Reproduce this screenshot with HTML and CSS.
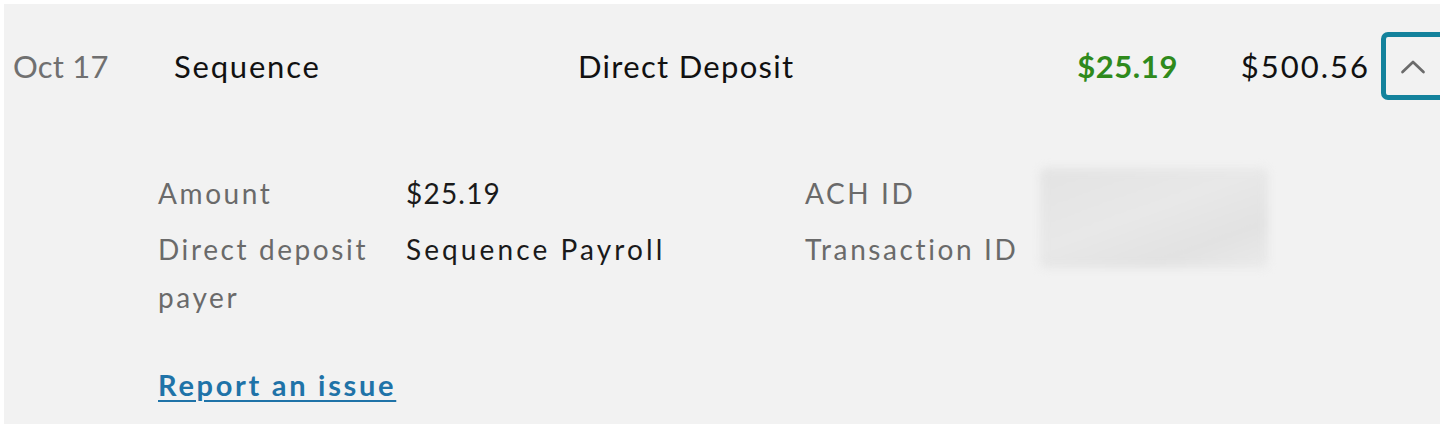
FILE: index.html
```html
<!DOCTYPE html>
<html lang="en">
<head>
<meta charset="utf-8">
<title>Transaction</title>
<link rel="stylesheet" href="styles.css">
</head>
<body>
<div class="txn">
  <div class="txn-row">
    <div class="date">Oct 17</div>
    <div class="merchant">Sequence</div>
    <div class="category">Direct Deposit</div>
    <div class="amount">$25.19</div>
    <div class="balance">$500.56</div>
    <button class="toggle" aria-label="Collapse">
      <svg width="26" height="17" viewBox="0 0 26 17"><path d="M2.5 14 L13 4 L23.5 14" fill="none" stroke="#6b6b6b" stroke-width="2.7" stroke-linecap="round" stroke-linejoin="round"/></svg>
    </button>
  </div>
  <div class="details">
    <div class="label">Amount</div>
    <div class="value num">$25.19</div>
    <div class="label">ACH ID</div>
    <div class="redacted"></div>
    <div class="label">Direct deposit payer</div>
    <div class="value">Sequence Payroll</div>
    <div class="label">Transaction ID</div>
  </div>
  <a class="report" href="#">Report an issue</a>
</div>
</body>
</html>
```
FILE: styles.css
```css
html, body {
  margin: 0;
  padding: 0;
  background: #ffffff;
}
body {
  font-family: "Lato", "Noto Sans", sans-serif;
  padding: 4px 0 0 4px;
  height: 428px;
  box-sizing: border-box;
  overflow: hidden;
}
.txn {
  background: #f2f2f2;
  height: 420px;
  overflow: hidden;
}
.txn-row {
  display: flex;
  align-items: center;
  padding: 28px 0 0 9px;
  height: 68px;
  font-size: 31px;
  letter-spacing: 1.3px;
  white-space: nowrap;
}
.date {
  width: 161px;
  color: #707070;
  letter-spacing: 0.2px;
}
.merchant {
  width: 404px;
  color: #111111;
  letter-spacing: 1.8px;
}
.category {
  flex: 1;
  color: #111111;
}
.amount {
  width: 140px;
  text-align: right;
  color: #2f8a1c;
  font-weight: 700;
  letter-spacing: 0.6px;
}
.balance {
  width: 192px;
  text-align: right;
  color: #111111;
  letter-spacing: 2px;
}
.toggle {
  margin-left: 11px;
  margin-right: -7px;
  width: 66px;
  height: 68px;
  flex: none;
  box-sizing: border-box;
  border: 5px solid #13829c;
  border-radius: 7px;
  background: transparent;
  display: flex;
  align-items: center;
  justify-content: flex-start;
  padding: 0 0 0 14px;
}
.toggle svg { display: block; }
.details {
  display: grid;
  grid-template-columns: 248px 399px 235px 228px;
  row-gap: 8px;
  padding: 69px 0 0 154px;
  font-size: 28px;
  line-height: 48px;
  letter-spacing: 2.6px;
}
.label {
  color: #6a6a6a;
  padding-right: 10px;
}
.value {
  color: #1a1a1a;
  letter-spacing: 3.1px;
}
.value.num {
  letter-spacing: 1.2px;
}
.redacted {
  grid-column: 4;
  grid-row: 1 / span 2;
  height: 100px;
  margin-top: -1px;
  background: linear-gradient(160deg, #e3e3e3 0%, #e8e8e8 45%, #e2e2e2 75%, #eaeaea 100%);
  border-radius: 6px;
  filter: blur(4px);
}
.report {
  display: inline-block;
  margin: 46px 0 0 154px;
  font-size: 29px;
  font-weight: 700;
  letter-spacing: 2.7px;
  color: #1f73a8;
  text-decoration: underline;
  text-decoration-thickness: 2px;
  text-underline-offset: 4px;
}
```
